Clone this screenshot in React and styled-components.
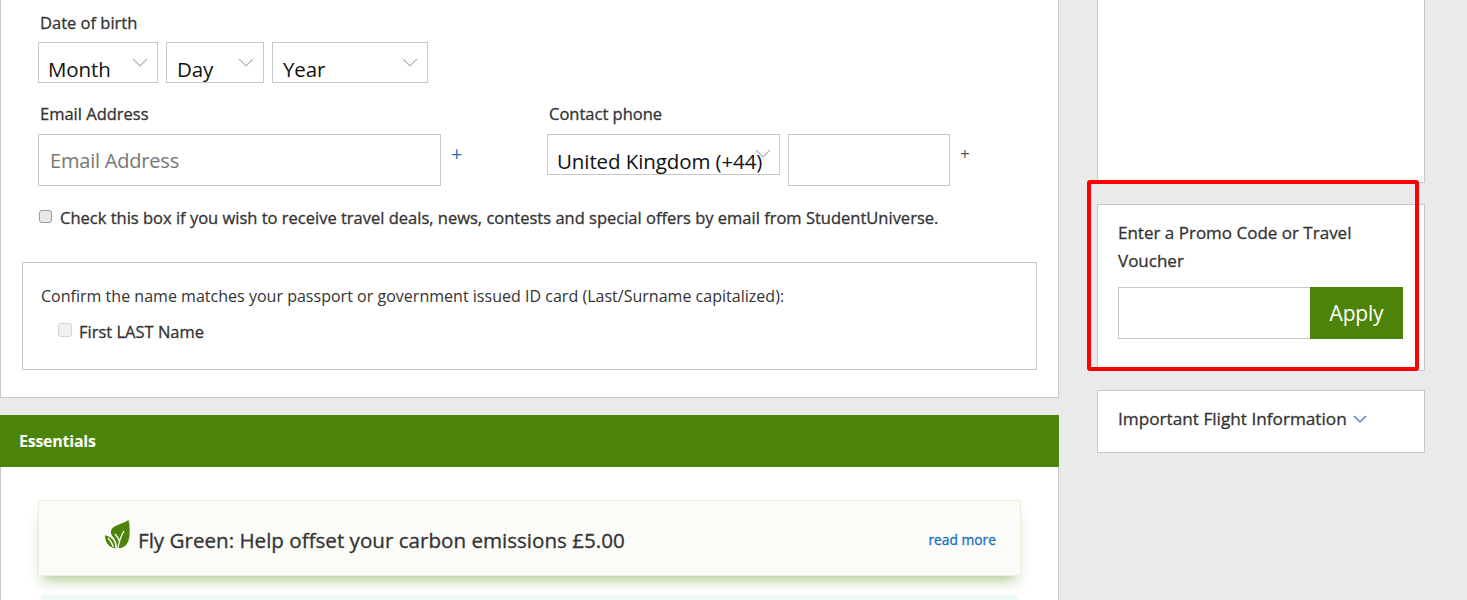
import React from "react";
import styled, { createGlobalStyle, css } from "styled-components";

const Global = createGlobalStyle`
  html, body { margin: 0; padding: 0; background: #eaeaea; }
  body { font-family: "Open Sans", "Noto Sans", "Liberation Sans", sans-serif; color: #333; overflow: hidden; }
  * { box-sizing: border-box; }
`;

const medium = css`
  font-weight: 400;
  -webkit-text-stroke: 0.3px currentColor;
`;

const Page = styled.div`
  position: relative;
  width: 1467px;
  height: 600px;
  overflow: hidden;
  display: flex;
  align-items: flex-start;
  background: #eaeaea;
`;
const Main = styled.main`
  width: 1059px;
  flex: none;
`;
const FormPanel = styled.section`
  height: 398px;
  background: #fff;
  border: 1px solid #c8c8c8;
  border-top: 0;
  padding: 13px 21px 0 21px;
`;
const FieldLabel = styled.label`
  display: block;
  font-size: 16.5px;
  line-height: 20px;
  ${medium}
  color: #333;
  margin-left: ${(p) => p.$indent || 18}px;
`;
const DateRow = styled.div`
  display: flex;
  gap: 8px;
  margin: 9px 0 0 16px;
`;
const SelectBox = styled.div`
  position: relative;
  width: ${(p) => p.$w}px;
  height: 41px;
  flex: none;
  border: 1px solid #c8c8c8;
  background: #fff;
  overflow: hidden;
  font-size: 20.5px;
  line-height: 28px;
  color: #111;
  padding: 12px 0 0 ${(p) => p.$pad || 9}px;
  white-space: nowrap;
  letter-spacing: -0.1px;
`;
const Caret = styled.svg`
  position: absolute;
  top: ${(p) => p.$top || 15}px;
  right: ${(p) => p.$right || 9}px;
  width: 16px;
  height: 9px;
  fill: none;
  stroke: #b4b4b4;
  stroke-width: 1.2;
`;
const ContactRow = styled.div`
  display: flex;
  margin: 21px 0 0 0;
`;
const EmailField = styled.div`
  width: 525px;
  flex: none;
`;
const PhoneField = styled.div`
  flex: 1;
`;
const InputLine = styled.div`
  display: flex;
  align-items: flex-start;
  margin: 10px 0 0 ${(p) => p.$left}px;
`;
const TextBox = styled.div`
  width: ${(p) => p.$w}px;
  height: ${(p) => p.$h}px;
  flex: none;
  background: #fff;
  border: 1px solid #c8c8c8;
  margin-left: ${(p) => p.$ml || 0}px;
  padding-left: 11px;
  font-size: 20px;
  line-height: 52px;
  color: #777;
  letter-spacing: -0.2px;
`;
const Plus = styled.span`
  font-size: ${(p) => p.$size}px;
  line-height: 20px;
  margin: 10px 0 0 ${(p) => p.$ml}px;
  color: ${(p) => p.$color};
`;
const ConsentRow = styled.div`
  display: flex;
  align-items: center;
  margin: 19px 0 0 17px;
  height: 24px;
`;
const Check = styled.span`
  width: ${(p) => p.$s}px;
  height: ${(p) => p.$s}px;
  flex: none;
  border: 1px solid ${(p) => (p.$dim ? "#d4d4d4" : "#9a9a9a")};
  border-radius: 3px;
  background: ${(p) => (p.$dim ? "#f0f0f0" : "#e8e8e8")};
  margin-top: ${(p) => (p.$dim ? -2 : -2)}px;
`;
const ConsentText = styled.span`
  font-size: 16.5px;
  ${medium}
  margin-left: 8px;
  white-space: nowrap;
  color: #333;
`;
const ConfirmBox = styled.div`
  margin: 33px 0 0 0;
  width: 1015px;
  height: 108px;
  border: 1px solid #c8c8c8;
  padding: 22px 0 0 18px;
`;
const ConfirmText = styled.div`
  font-size: 16px;
  line-height: 22px;
  letter-spacing: 0.02px;
  color: #333;
  white-space: nowrap;
`;
const NameRow = styled.div`
  display: flex;
  align-items: center;
  margin: 13px 0 0 17px;
  height: 22px;
`;
const NameText = styled.span`
  font-size: 16.5px;
  ${medium}
  margin-left: 7px;
  color: #333;
`;
const GreenBar = styled.h2`
  margin: 17px 0 0;
  height: 52px;
  background: #4c8409;
  color: #fff;
  font-size: 16px;
  font-weight: 700;
  line-height: 53px;
  padding-left: 19px;
  letter-spacing: -0.25px;
`;
const EssentialsPanel = styled.section`
  height: 140px;
  background: #fff;
  border: 1px solid #c8c8c8;
  border-top: 0;
  padding: 33px 37px 0;
`;
const OfferCard = styled.div`
  width: 983px;
  height: 76px;
  background: #fbfbf8;
  border: 1px solid #e9f1dc;
  box-shadow: 0 9px 13px -5px rgba(76, 132, 9, 0.45);
  display: flex;
  align-items: center;
  padding: 0 24px 0 66px;
`;
const Leaf = styled.svg`
  width: 25px;
  height: 30px;
  flex: none;
  margin-top: -6px;
`;
const OfferTitle = styled.span`
  font-size: 20.6px;
  ${medium}
  margin: 4px 0 0 8px;
  color: #333;
  white-space: nowrap;
`;
const ReadMore = styled.a`
  margin: 2px 0 0 auto;
  font-size: 13.8px;
  ${medium}
  color: #1a6fc0;
  white-space: nowrap;
`;
const NextCard = styled.div`
  width: 977px;
  height: 30px;
  margin: 19px 0 0 3px;
  background: #eef8f8;
`;
const Side = styled.aside`
  width: 328px;
  flex: none;
  margin-left: 38px;
  display: flex;
  flex-direction: column;
`;
const SideCard = styled.div`
  background: #fff;
  border: 1px solid #c8c8c8;
  border-top-width: ${(p) => (p.$open ? 0 : 1)}px;
  height: ${(p) => p.$h}px;
  margin-top: ${(p) => p.$mt || 0}px;
  padding: ${(p) => p.$pad || "0 20px"};
`;
const PromoTitle = styled.div`
  font-size: 17px;
  line-height: 28px;
  ${medium}
  color: #333;
`;
const PromoRow = styled.div`
  display: flex;
  margin-top: 12px;
  width: 285px;
`;
const PromoInput = styled.div`
  flex: 1;
  height: 52px;
  border: 1px solid #c8c8c8;
  border-right: 0;
`;
const ApplyButton = styled.button`
  width: 93px;
  height: 52px;
  border: 0;
  background: #4c8409;
  color: #fff;
  font-family: inherit;
  font-size: 21px;
  letter-spacing: -0.2px;
  padding: 0;
`;
const InfoTitle = styled.div`
  display: flex;
  align-items: center;
  font-size: 17.2px;
  ${medium}
  line-height: 24px;
  color: #333;
  white-space: nowrap;
`;
const InfoCaret = styled.svg`
  width: 14px;
  height: 8px;
  margin: -1px 0 0 6px;
  fill: none;
  stroke: #2f74c0;
  stroke-width: 1.2;
`;
const Highlight = styled.div`
  position: absolute;
  left: 1087px;
  top: 180px;
  width: 332px;
  height: 191px;
  border: 4px solid #fe0000;
  border-radius: 3px;
  pointer-events: none;
`;

const Chevron = ({ top, right }) => (
  <Caret $top={top} $right={right} viewBox="0 0 16 9"><path d="M1 1l7 7 7-7" /></Caret>
);

export default function App() {
  return (
    <Page>
      <Global />
      <Main>
        <FormPanel>
          <FieldLabel>Date of birth</FieldLabel>
          <DateRow>
            <SelectBox $w={120}>Month<Chevron /></SelectBox>
            <SelectBox $w={98} $pad={10}>Day<Chevron /></SelectBox>
            <SelectBox $w={156} $pad={10}>Year<Chevron /></SelectBox>
          </DateRow>
          <ContactRow>
            <EmailField>
              <FieldLabel>Email Address</FieldLabel>
              <InputLine $left={16}>
                <TextBox $w={403} $h={52}>Email Address</TextBox>
                <Plus $size={20} $ml={10} $color="#1a6fc0">+</Plus>
              </InputLine>
            </EmailField>
            <PhoneField>
              <FieldLabel $indent={2}>Contact phone</FieldLabel>
              <InputLine $left={0}>
                <SelectBox $w={233}>United Kingdom (+44)<Chevron top={14} right={8} /></SelectBox>
                <TextBox $w={162} $h={52} $ml={8} />
                <Plus $size={17} $ml={10} $color="#555">+</Plus>
              </InputLine>
            </PhoneField>
          </ContactRow>
          <ConsentRow>
            <Check $s={13} />
            <ConsentText>Check this box if you wish to receive travel deals, news, contests and special offers by email from StudentUniverse.</ConsentText>
          </ConsentRow>
          <ConfirmBox>
            <ConfirmText>Confirm the name matches your passport or government issued ID card (Last/Surname capitalized):</ConfirmText>
            <NameRow>
              <Check $s={14} $dim />
              <NameText>First LAST Name</NameText>
            </NameRow>
          </ConfirmBox>
        </FormPanel>
        <GreenBar>Essentials</GreenBar>
        <EssentialsPanel>
          <OfferCard>
            <Leaf viewBox="0 0 25 30">
              <path fill="#4c8409" d="M23.5 0C16 5 7 5 6 11c-.5 3 1 5 3 7 2 3 3 7 3 10 7 1 12-4 12.5-13C25 9 24.5 4 23.5 0z" />
              <path fill="#4c8409" d="M0 15c0 7 3 12 10.5 13.5C10.5 24 9 20 6 18c-2-1.500-4-2-6-3z" />
              <path fill="none" stroke="#fff" strokeWidth="1.3" d="M13 28c1-7 3-12 6-17M14.500 21.500C13.500 18.500 12 16 10 14M8.500 27C7 23 5 20 3 18" />
            </Leaf>
            <OfferTitle>Fly Green: Help offset your carbon emissions £5.00</OfferTitle>
            <ReadMore>read more</ReadMore>
          </OfferCard>
          <NextCard />
        </EssentialsPanel>
      </Main>
      <Side>
        <SideCard $open $h={183} />
        <SideCard $h={167} $mt={21} $pad="14px 20px 0">
          <PromoTitle>Enter a Promo Code or Travel Voucher</PromoTitle>
          <PromoRow>
            <PromoInput />
            <ApplyButton>Apply</ApplyButton>
          </PromoRow>
        </SideCard>
        <SideCard $h={63} $mt={19} $pad="16px 20px 0">
          <InfoTitle>
            Important Flight Information
            <InfoCaret viewBox="0 0 14 8"><path d="M1 1l6 6 6-6" /></InfoCaret>
          </InfoTitle>
        </SideCard>
      </Side>
      <Highlight />
    </Page>
  );
}
